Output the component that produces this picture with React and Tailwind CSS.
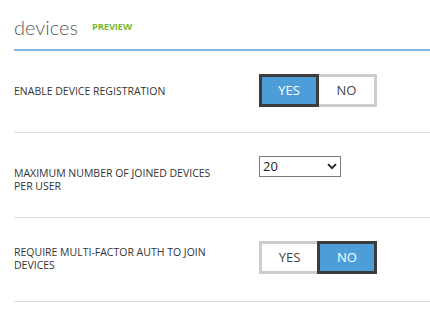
import React from 'react'

const Toggle = ({ value }) => {
  const on = 'w-[60px] h-[33px] border-[3px] border-[#3c3c3c] bg-[#4d9dd8] text-white'
  const off = 'w-[58px] h-[33px] border-[3px] border-[#cdcdcd] bg-white text-[#444]'
  return (
    <div className="flex text-[13px] leading-none">
      <div className={`${value ? on : off + ' border-r-0'} flex items-center justify-center`}>YES</div>
      <div className={`${!value ? on : off + ' border-l-0'} flex items-center justify-center`}>NO</div>
    </div>
  )
}

const Row = ({ height, labelTop, label, children }) => (
  <div className={`flex items-start border-b border-[#dddddd] pt-[23px] ${height}`}>
    <div className={`w-[245px] text-[10.5px] leading-[13px] font-medium text-[#333] ${labelTop}`}>
      {label}
    </div>
    {children}
  </div>
)

export default function App() {
  return (
    <div className="w-[430px] h-[319px] bg-white pl-[14px] font-['Open_Sans',sans-serif]">
      <div className="h-[51px] border-b-2 border-[#84b4e4] flex items-start pt-[13px]">
        <span className="font-['Lato',sans-serif] text-[20px] font-light text-[#5a5a5a] leading-[28px]">devices</span>
        <span className="ml-[14px] mt-[9px] text-[9.5px] font-bold text-[#7cb82f] leading-none tracking-[-0.2px]">PREVIEW</span>
      </div>

      <Row height="h-[82px]" labelTop="mt-[11px]" label="ENABLE DEVICE REGISTRATION">
        <Toggle value={true} />
      </Row>

      <Row
        height="h-[85px]"
        labelTop="mt-[11px]"
        label={<>MAXIMUM NUMBER OF JOINED DEVICES<br />PER USER</>}
      >
        <div className="w-[82px] h-[21px] border border-[#7a7a7a] flex items-center justify-between pl-[3px] pr-[3px] text-[13px] text-[#222]">
          <span>20</span>
          <svg width="10" height="7" viewBox="0 0 10 7">
            <path d="M1 1.2 L5 5.2 L9 1.2" fill="none" stroke="#222" strokeWidth="1.9" />
          </svg>
        </div>
      </Row>

      <Row
        height="h-[84px]"
        labelTop="mt-[5px]"
        label={<>REQUIRE MULTI-FACTOR AUTH TO JOIN<br />DEVICES</>}
      >
        <Toggle value={false} />
      </Row>
    </div>
  )
}
